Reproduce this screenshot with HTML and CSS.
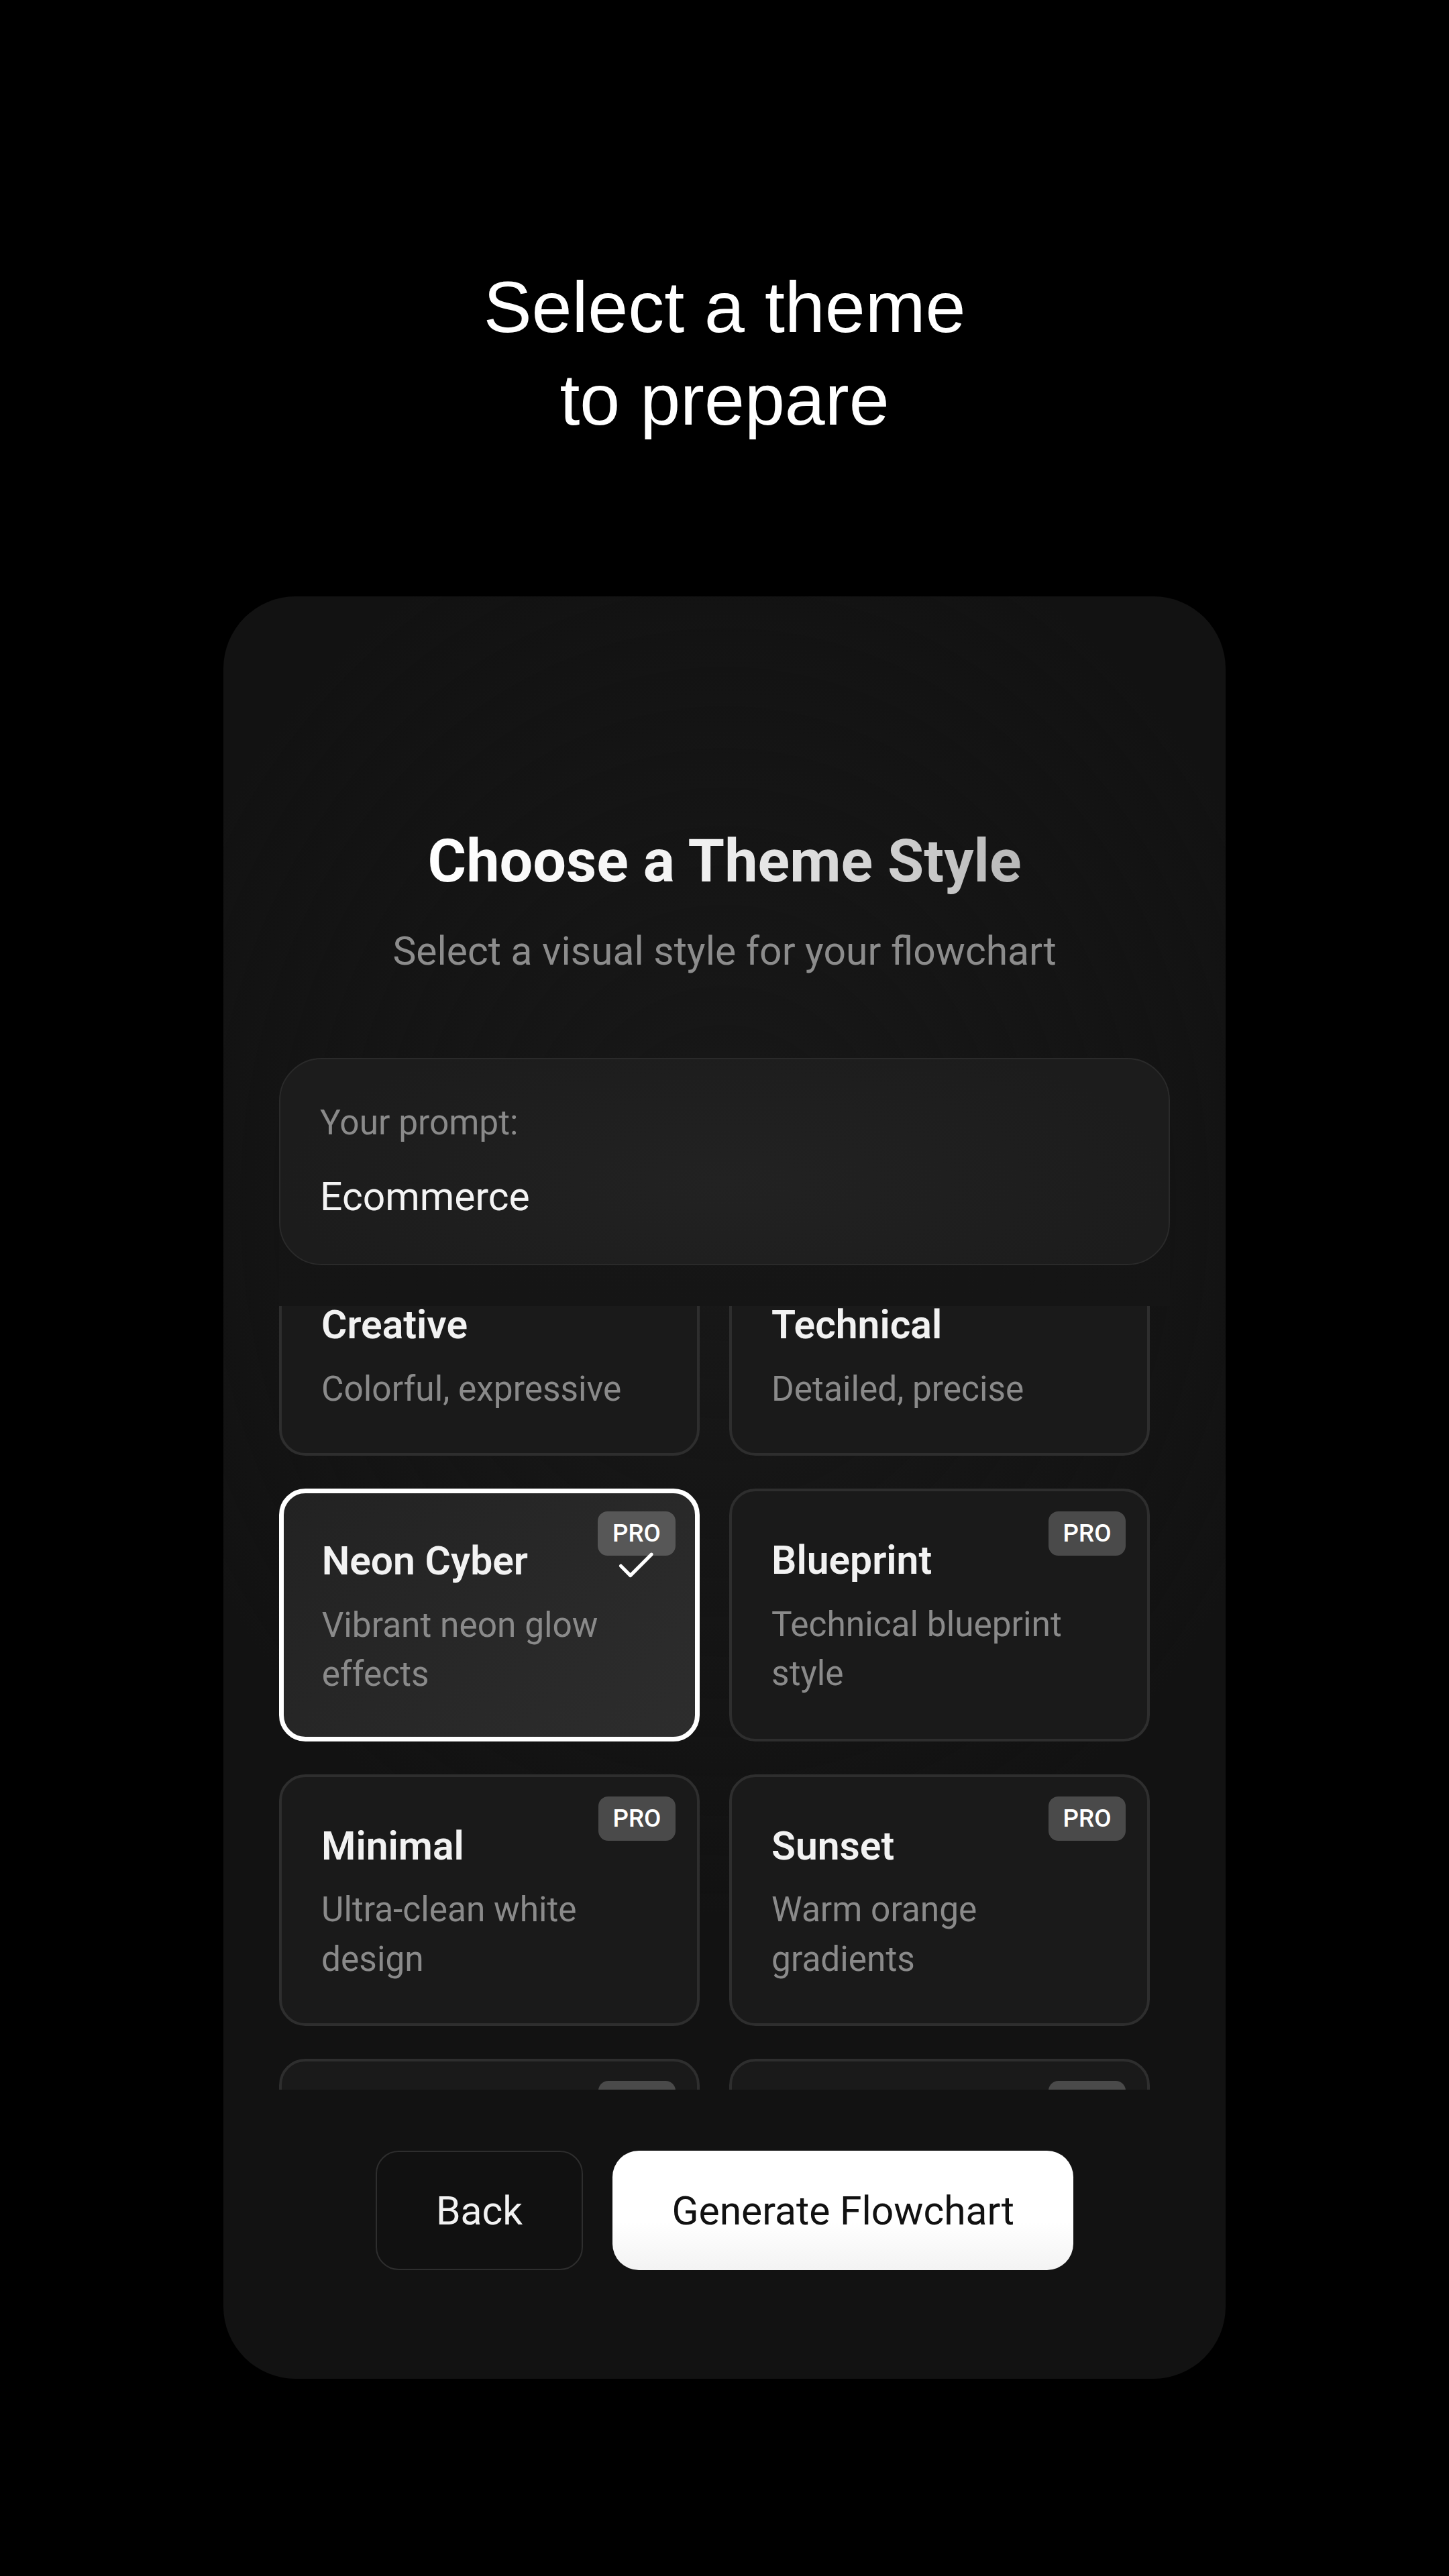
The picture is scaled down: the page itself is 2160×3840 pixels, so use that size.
FILE: index.html
```html
<!DOCTYPE html>
<html lang="en">
<head>
<meta charset="utf-8">
<title>Select a theme</title>
<link rel="stylesheet" href="styles.css">
</head>
<body>
<main class="page">
  <h1 class="hero">Select a theme<br>to prepare</h1>
  <section class="panel">
    <div class="panel-head">
      <h2 class="panel-title">Choose a Theme Style</h2>
      <p class="panel-sub">Select a visual style for your flowchart</p>
    </div>
    <div class="prompt-wrap">
      <div class="prompt">
        <div class="prompt-label">Your prompt:</div>
        <div class="prompt-value">Ecommerce</div>
      </div>
    </div>
    <div class="list-viewport">
      <div class="grid">
        <div class="theme">
          <div class="theme-name">Creative</div>
          <div class="theme-desc">Colorful, expressive</div>
        </div>
        <div class="theme">
          <div class="theme-name">Technical</div>
          <div class="theme-desc">Detailed, precise</div>
        </div>
        <div class="theme theme-selected">
          <span class="badge">PRO</span>
          <svg class="check" viewBox="0 0 24 24" fill="none" stroke="#ffffff" stroke-width="1.8" stroke-linecap="round" stroke-linejoin="round"><path d="M20 6 9 17l-5-5"/></svg>
          <div class="theme-name">Neon Cyber</div>
          <div class="theme-desc">Vibrant neon glow effects</div>
        </div>
        <div class="theme">
          <span class="badge">PRO</span>
          <div class="theme-name">Blueprint</div>
          <div class="theme-desc">Technical blueprint style</div>
        </div>
        <div class="theme">
          <span class="badge">PRO</span>
          <div class="theme-name">Minimal</div>
          <div class="theme-desc">Ultra-clean white design</div>
        </div>
        <div class="theme">
          <span class="badge">PRO</span>
          <div class="theme-name">Sunset</div>
          <div class="theme-desc">Warm orange gradients</div>
        </div>
        <div class="theme">
          <span class="badge">PRO</span>
          <div class="theme-name">Ocean</div>
          <div class="theme-desc">Deep blue tones</div>
        </div>
        <div class="theme">
          <span class="badge">PRO</span>
          <div class="theme-name">Forest</div>
          <div class="theme-desc">Natural green palette</div>
        </div>
      </div>
    </div>
    <div class="actions">
      <button class="btn btn-back" type="button">Back</button>
      <button class="btn btn-primary" type="button">Generate Flowchart</button>
    </div>
  </section>
</main>
</body>
</html>
```

FILE: styles.css
```css
html {
  zoom: 2.449;
  background: #000;
}

body {
  margin: 0;
  background: #000;
  font-family: Roboto, "Noto Sans", Arial, sans-serif;
  color: #f2f2f2;
}

.page {
  min-height: 1568px;
  padding-top: 159px;
  box-sizing: border-box;
  display: flex;
  flex-direction: column;
  align-items: center;
}

.hero {
  margin: 0 0 92px;
  font-family: "Liberation Sans", Arial, sans-serif;
  font-weight: 400;
  font-size: 44px;
  line-height: 56px;
  text-align: center;
  color: #fff;
}

.panel {
  width: 610px;
  height: 1085px;
  box-sizing: border-box;
  padding: 140px 34px 65px;
  border-radius: 44px;
  background:
    radial-gradient(ellipse 60% 40% at 50% 34%, #181818 0%, rgba(24,24,24,0) 100%),
    #121212;
  display: flex;
  flex-direction: column;
}

.panel-head {
  text-align: center;
}

.panel-title {
  margin: 0;
  font-size: 36px;
  line-height: 43px;
  font-weight: 700;
  background: linear-gradient(90deg, #ffffff 0%, #f2f2f2 45%, #b8b8b8 100%);
  -webkit-background-clip: text;
  background-clip: text;
  color: transparent;
  display: inline-block;
}

.panel-sub {
  margin: 19px 0 0;
  font-size: 24px;
  line-height: 28px;
  color: #8c8c8c;
}

.prompt-wrap {
  margin-top: 51px;
  padding-bottom: 25px;
  background: linear-gradient(180deg, rgba(22,22,22,0) 0%, #151515 100%);
}

.prompt {
  height: 126px;
  box-sizing: border-box;
  padding: 27px 24px 0;
  border: 1px solid #2a2a2a;
  border-radius: 26px;
  background: radial-gradient(ellipse 50% 80% at 50% 60%, #222222 0%, #1c1c1c 100%);
}

.prompt-label {
  font-size: 21px;
  line-height: 24px;
  color: #8a8a8a;
}

.prompt-value {
  margin-top: 18px;
  font-size: 24px;
  line-height: 29px;
  color: #f4f4f4;
}

.list-viewport {
  height: 477px;
  overflow: hidden;
  padding-right: 12px;
}

.grid {
  margin-top: -32px;
  display: grid;
  grid-template-columns: 1fr 1fr;
  column-gap: 18px;
  row-gap: 20px;
}

.theme {
  position: relative;
  padding: 24px;
  border: 2px solid #2e2e2e;
  border-radius: 16px;
  background: #1a1a1a;
}

.theme-selected {
  border: 3px solid #ffffff;
  padding: 23px;
  background: linear-gradient(135deg, #222222 0%, #2d2d2d 100%);
}

.theme-name {
  font-size: 24px;
  line-height: 36px;
  font-weight: 600;
  color: #f2f2f2;
  margin-bottom: 6px;
}

.theme-desc {
  font-size: 21px;
  line-height: 30px;
  color: #8a8a8a;
  padding-right: 12px;
}

.badge {
  position: absolute;
  top: 12px;
  right: 13px;
  height: 27px;
  padding: 0 9px;
  border-radius: 6px;
  background: #4a4a4a;
  color: #fff;
  font-size: 15px;
  line-height: 27px;
  font-weight: 500;
}

.theme-selected .badge {
  top: 11px;
  right: 12px;
  background: #575757;
}

.check {
  position: absolute;
  top: 30px;
  right: 22px;
  width: 28px;
  height: 28px;
}

.actions {
  margin-top: 37px;
  display: flex;
  justify-content: center;
  gap: 18px;
}

.btn {
  height: 73px;
  padding: 0 36px;
  font-family: Roboto, "Noto Sans", Arial, sans-serif;
  font-size: 24px;
  line-height: 29px;
  cursor: pointer;
}

.btn-back {
  border: 1px solid #2e2e2e;
  border-radius: 14px;
  background: #111111;
  color: #f2f2f2;
}

.btn-primary {
  border: none;
  border-radius: 16px;
  background: linear-gradient(180deg, #ffffff 0%, #ffffff 60%, #f3f3f3 100%);
  color: #111111;
}
```
